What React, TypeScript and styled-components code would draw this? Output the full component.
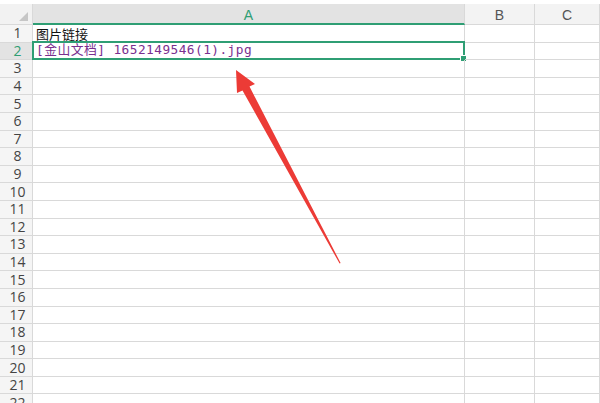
import React from "react";
import styled, { createGlobalStyle } from "styled-components";

const Global = createGlobalStyle`
  html, body { margin: 0; padding: 0; background: #ffffff; }
  body { width: 600px; height: 403px; overflow: hidden; font-family: "Noto Sans CJK SC", "Noto Sans", sans-serif; }
`;

const COLS = "33px 432px 70px 1fr";
const ROW_H = 17.6;
const GREEN = "#2f9e74";
const GRID = "#d9d9d9";

const Page = styled.div`
  position: relative;
  width: 600px;
  height: 403px;
  overflow: hidden;
  padding-top: 4px;
  box-sizing: border-box;
  background: #fff;
`;

const HeaderRow = styled.div`
  display: grid;
  grid-template-columns: ${COLS};
  height: 21px;
`;

const Corner = styled.div`
  position: relative;
  background: #f2f2f2;
  border-right: 1px solid ${GRID};
  border-bottom: 1px solid ${GRID};
  box-sizing: border-box;
`;

const CornerTri = styled.div`
  position: absolute;
  right: 4px;
  bottom: 3px;
  width: 0;
  height: 0;
  border-left: 9px solid transparent;
  border-bottom: 9px solid #c6c6c6;
`;

const ColHead = styled.div<{ $active?: boolean }>`
  display: flex;
  align-items: center;
  justify-content: center;
  box-sizing: border-box;
  background: ${(p) => (p.$active ? "#e3e3e3" : "#f3f3f3")};
  border-right: 1px solid ${GRID};
  border-bottom: ${(p) => (p.$active ? `2px solid ${GREEN}` : `1px solid ${GRID}`)};
  color: ${(p) => (p.$active ? GREEN : "#555")};
  font-family: "Liberation Sans", "Noto Sans", sans-serif;
  font-size: 14px;
  padding-top: 2px;
`;

const Body = styled.div`
  display: flex;
  flex-direction: column;
`;

const Row = styled.div`
  display: grid;
  grid-template-columns: ${COLS};
  height: ${ROW_H}px;
`;

const RowNum = styled.div<{ $active?: boolean }>`
  display: flex;
  align-items: center;
  justify-content: center;
  box-sizing: border-box;
  background: ${(p) => (p.$active ? "#e3e3e3" : "#f5f5f5")};
  border-right: 1px solid ${GRID};
  border-bottom: 1px solid ${GRID};
  color: ${(p) => (p.$active ? GREEN : "#444")};
  font-family: "Open Sans", "Liberation Sans", sans-serif;
  font-size: 14px;
  line-height: 1;
  padding-left: 3px;
`;

const Cell = styled.div`
  position: relative;
  display: flex;
  align-items: center;
  box-sizing: border-box;
  border-right: 1px solid ${GRID};
  border-bottom: 1px solid ${GRID};
  padding-left: 3px;
  white-space: nowrap;
  overflow: visible;
`;

const PlainText = styled.span`
  font-family: "Noto Sans CJK SC", sans-serif;
  font-size: 13px;
  color: #111;
  line-height: 1;
`;

const LinkText = styled.span`
  font-family: "DejaVu Sans Mono", "Noto Sans CJK SC", monospace;
  font-size: 12.8px;
  color: #7a2f8f;
  line-height: 1;
  letter-spacing: 0.45px;
`;

const Selection = styled.div`
  position: absolute;
  left: -1px;
  top: -2px;
  right: -1px;
  bottom: -1px;
  border: 2px solid ${GREEN};
  pointer-events: none;
`;

const Handle = styled.div`
  position: absolute;
  right: -4px;
  bottom: -4px;
  width: 5px;
  height: 5px;
  background: ${GREEN};
  border: 1px solid #fff;
`;

const ArrowSvg = styled.svg`
  position: absolute;
  left: 0;
  top: 0;
  pointer-events: none;
`;

export default function App() {
  const rows = Array.from({ length: 22 }, (_, i) => i + 1);
  return (
    <>
      <Global />
      <Page>
        <HeaderRow>
          <Corner>
            <CornerTri />
          </Corner>
          <ColHead $active>A</ColHead>
          <ColHead>B</ColHead>
          <ColHead>C</ColHead>
        </HeaderRow>
        <Body>
          {rows.map((n) => (
            <Row key={n}>
              <RowNum $active={n === 2}>{n}</RowNum>
              <Cell>
                {n === 1 && <PlainText>图片链接</PlainText>}
                {n === 2 && (
                  <>
                    <LinkText>[金山文档] 1652149546(1).jpg</LinkText>
                    <Selection>
                      <Handle />
                    </Selection>
                  </>
                )}
              </Cell>
              <Cell />
              <Cell />
            </Row>
          ))}
        </Body>
        <ArrowSvg width="600" height="403" viewBox="0 0 600 403">
          <polygon
            points="236,70 255,84 249.5,86.6 340.6,263 339.6,263.6 242.5,90.4 237,93"
            fill="#ec3b36"
          />
        </ArrowSvg>
      </Page>
    </>
  );
}
